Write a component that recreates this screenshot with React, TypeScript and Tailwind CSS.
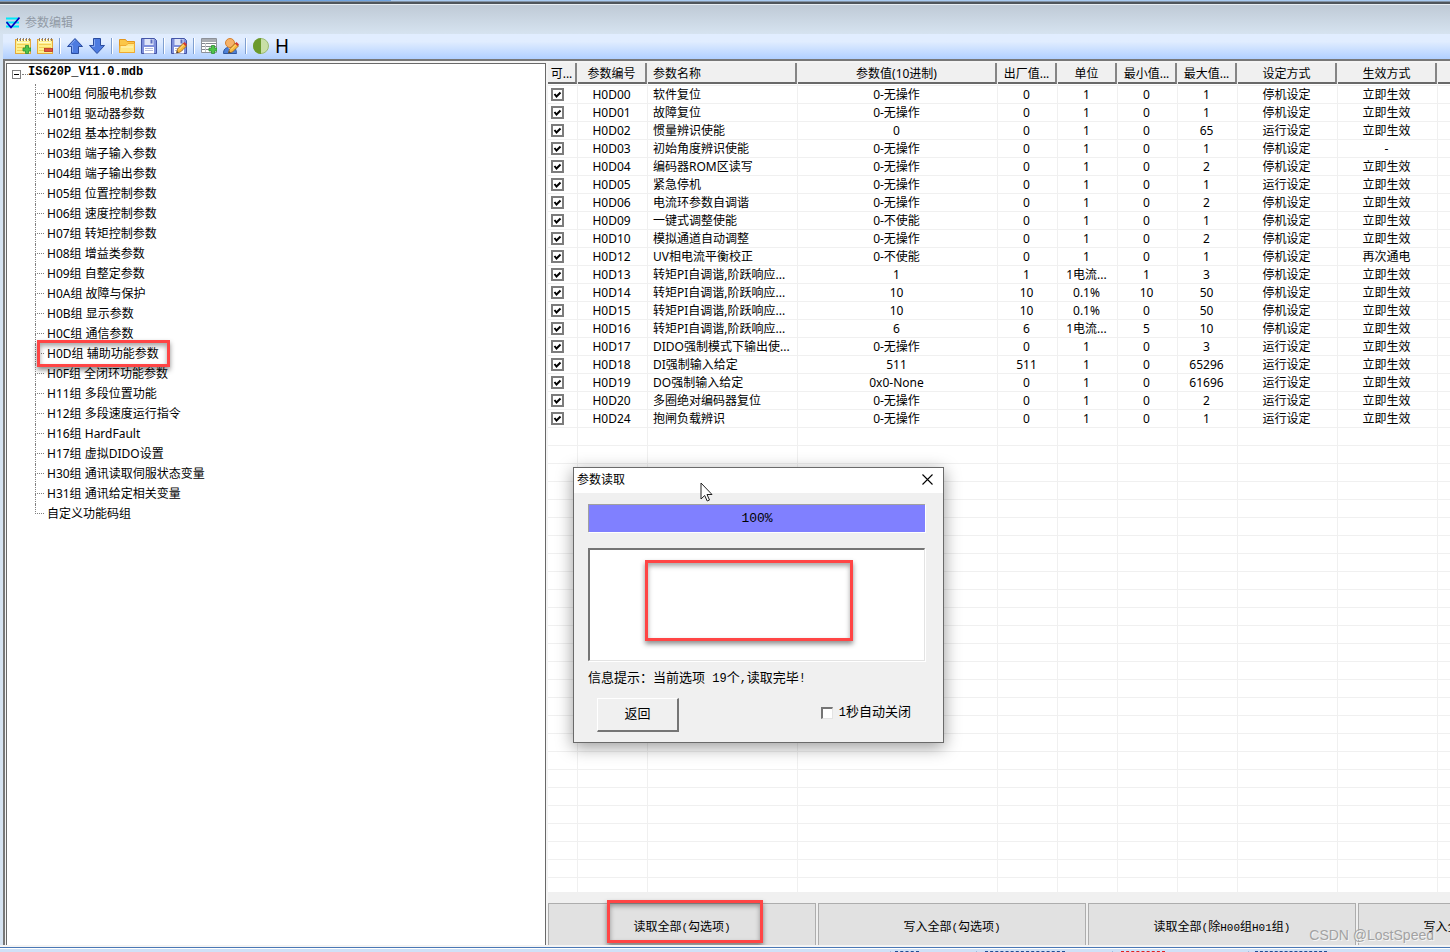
import { Fragment, useState } from "react";
import type { ReactNode } from "react";

const groups = [
  "H00组 伺服电机参数",
  "H01组 驱动器参数",
  "H02组 基本控制参数",
  "H03组 端子输入参数",
  "H04组 端子输出参数",
  "H05组 位置控制参数",
  "H06组 速度控制参数",
  "H07组 转矩控制参数",
  "H08组 增益类参数",
  "H09组 自整定参数",
  "H0A组 故障与保护",
  "H0B组 显示参数",
  "H0C组 通信参数",
  "H0D组 辅助功能参数",
  "H0F组 全闭环功能参数",
  "H11组 多段位置功能",
  "H12组 多段速度运行指令",
  "H16组 HardFault",
  "H17组 虚拟DIDO设置",
  "H30组 通讯读取伺服状态变量",
  "H31组 通讯给定相关变量",
  "自定义功能码组",
];

const headers = [
  "可...",
  "参数编号",
  "参数名称",
  "参数值(10进制)",
  "出厂值...",
  "单位",
  "最小值...",
  "最大值...",
  "设定方式",
  "生效方式",
  "",
];

const STOP = "停机设定";
const RUN = "运行设定";
const NOW = "立即生效";

// code, name, value, default, unit, min, max, set mode, effect mode
const rows = [
  ["H0D00", "软件复位", "0-无操作", "0", "1", "0", "1", STOP, NOW],
  ["H0D01", "故障复位", "0-无操作", "0", "1", "0", "1", STOP, NOW],
  ["H0D02", "惯量辨识使能", "0", "0", "1", "0", "65", RUN, NOW],
  ["H0D03", "初始角度辨识使能", "0-无操作", "0", "1", "0", "1", STOP, "-"],
  ["H0D04", "编码器ROM区读写", "0-无操作", "0", "1", "0", "2", STOP, NOW],
  ["H0D05", "紧急停机", "0-无操作", "0", "1", "0", "1", RUN, NOW],
  ["H0D06", "电流环参数自调谐", "0-无操作", "0", "1", "0", "2", STOP, NOW],
  ["H0D09", "一键式调整使能", "0-不使能", "0", "1", "0", "1", STOP, NOW],
  ["H0D10", "模拟通道自动调整", "0-无操作", "0", "1", "0", "2", STOP, NOW],
  ["H0D12", "UV相电流平衡校正", "0-不使能", "0", "1", "0", "1", STOP, "再次通电"],
  ["H0D13", "转矩PI自调谐,阶跃响应...", "1", "1", "1电流...", "1", "3", STOP, NOW],
  ["H0D14", "转矩PI自调谐,阶跃响应...", "10", "10", "0.1%", "10", "50", STOP, NOW],
  ["H0D15", "转矩PI自调谐,阶跃响应...", "10", "10", "0.1%", "0", "50", STOP, NOW],
  ["H0D16", "转矩PI自调谐,阶跃响应...", "6", "6", "1电流...", "5", "10", STOP, NOW],
  ["H0D17", "DIDO强制模式下输出使...", "0-无操作", "0", "1", "0", "3", RUN, NOW],
  ["H0D18", "DI强制输入给定", "511", "511", "1", "0", "65296", RUN, NOW],
  ["H0D19", "DO强制输入给定", "0x0-None", "0", "1", "0", "61696", RUN, NOW],
  ["H0D20", "多圈绝对编码器复位", "0-无操作", "0", "1", "0", "2", RUN, NOW],
  ["H0D24", "抱闸负载辨识", "0-无操作", "0", "1", "0", "1", RUN, NOW],
];

const emptyRows = Array.from({ length: 26 }, (_, i) => i);

const actions = [
  "读取全部(勾选项)",
  "写入全部(勾选项)",
  "读取全部(除H00组H01组)",
  "写入全部(除H00组H01组)",
];

const redBox =
  "pointer-events-none absolute border-3 border-[#ff4545] shadow-[0_3px_5px_rgba(0,0,0,0.45),inset_0_3px_5px_rgba(0,0,0,0.35)]";

// half-width characters sit a bit smaller than the Chinese ones
function Song({ children, latin = "text-xs" }: { children: string; latin?: string }) {
  return (
    <span className="font-['Liberation_Mono','Noto_Sans_CJK_SC',monospace] whitespace-pre">
      {children.split(/([\x20-\x7e]+)/).map((part, i) =>
        i % 2 ? (
          <span key={i} className={latin}>
            {part}
          </span>
        ) : (
          <Fragment key={i}>{part}</Fragment>
        )
      )}
    </span>
  );
}

function Icon({ children }: { children: ReactNode }) {
  return (
    <svg viewBox="0 0 16 16" className="size-4" aria-hidden="true">
      {children}
    </svg>
  );
}

function Notepad({ children }: { children: ReactNode }) {
  return (
    <Icon>
      <rect x="0.5" y="1.5" width="15" height="14" fill="#fdf08c" stroke="#e5a93c" />
      <path d="M2 6.5h12M2 9.5h12M2 12.5h12" stroke="#f3cf58" />
      <path d="M2 4.5h12" stroke="#fffbd0" />
      <path d="M2.5 0v3M5.5 0v3M8.5 0v3M11.5 0v3M14.5 0v3" stroke="#8a7a6a" />
      <path d="M3.5 1v2M6.5 1v2M9.5 1v2M12.5 1v2" stroke="#fff" />
      {children}
    </Icon>
  );
}

function PlusMark() {
  return (
    <path
      d="M10.5 7.5h3v2.5h2.5v3h-2.5v2.5h-3V13H8v-3h2.5z"
      fill="#4fc34a"
      stroke="#2c8f35"
      strokeWidth="0.8"
    />
  );
}

function Pencil() {
  return (
    <>
      <path d="M5.5 15l1-4 6-6 3 3-6 6z" fill="#f7b73c" stroke="#96601c" strokeWidth="0.8" />
      <path d="M8 11.5l5-5" stroke="#ffe58a" />
      <path d="M12 5.5l1.5-1.5 2.5 2.5-1.5 1.5z" fill="#d43a30" />
      <path d="M5.5 15l.5-2 1.5 1.5z" fill="#333" />
    </>
  );
}

function Disk() {
  return (
    <>
      <path d="M.5.5h13l2 2v13H.5z" fill="#7f90dc" stroke="#4456a8" />
      <path d="M3.5 1h9v6h-9z" fill="#dfe5f8" />
      <path d="M9.5 1.5h2v4h-2z" fill="#5a6cbe" />
      <path d="M3 9h10v6.5H3z" fill="#fff" />
      <path d="M4 10.5h8M4 12.5h8" stroke="#b3badb" />
    </>
  );
}

function Tool({ label, children }: { label: string; children: ReactNode }) {
  return (
    <button type="button" aria-label={label} className="size-4 shrink-0">
      {children}
    </button>
  );
}

function Separator() {
  return <span className="h-4 w-0.5 border-l border-[#7f9fd0] bg-white" />;
}

function Toolbar() {
  return (
    <div className="flex h-[25px] items-center gap-1.5 bg-linear-to-b from-[#e1edff] from-30% to-[#b0cfff] pb-0.5 pl-3">
      <Tool label="添加">
        <Notepad>
          <PlusMark />
        </Notepad>
      </Tool>
      <Tool label="删除">
        <Notepad>
          <rect x="7.5" y="10.5" width="8" height="3" fill="#e0523c" stroke="#b23322" strokeWidth="0.8" />
        </Notepad>
      </Tool>
      <Separator />
      <Tool label="上移">
        <Icon>
          <path d="M8 .5L15.500 8.500h-4v7h-7v-7h-4z" fill="#4d7be0" stroke="#2a4c9f" />
          <path d="M8 2L3 7.500h2.500V14" fill="none" stroke="#86a9f2" />
        </Icon>
      </Tool>
      <Tool label="下移">
        <Icon>
          <path d="M8 15.500L.5 7.500h4v-7h7v7h4z" fill="#4d7be0" stroke="#2a4c9f" />
          <path d="M5.500 1.500v7H3" fill="none" stroke="#86a9f2" />
        </Icon>
      </Tool>
      <Separator />
      <Tool label="打开">
        <Icon>
          <path d="M.5 14.500v-13h6l1.500 2h7.500v11z" fill="#fbc648" stroke="#e3961e" />
          <path d="M1 7.500h6l2-2h6.500v9H.5z" fill="#ffe680" stroke="#f0aa30" />
          <path d="M2 9h12" stroke="#fff6c0" />
        </Icon>
      </Tool>
      <Tool label="保存">
        <Icon>
          <Disk />
        </Icon>
      </Tool>
      <Separator />
      <Tool label="另存为">
        <Icon>
          <Disk />
          <Pencil />
        </Icon>
      </Tool>
      <Separator />
      <Tool label="添加参数">
        <Icon>
          <path d="M.5.5h15v14H.5z" fill="#fff" stroke="#8d9199" />
          <path d="M1 1h14v3H1z" fill="#a9adb3" />
          <path d="M1 5.500h14M1 8.500h14M1 11.500h14" stroke="#83878e" />
          <path d="M4.500 5v9" stroke="#c3c6cb" />
          <PlusMark />
        </Icon>
      </Tool>
      <Tool label="用户编辑">
        <Icon>
          <path d="M.5 15.500c0-4 2-6 5-6h4c3 0 4 3 4 6z" fill="#4c7fd6" stroke="#2c559f" />
          <path d="M5 9.500l2.500 3 2.500-3z" fill="#fff" />
          <circle cx="7" cy="5" r="4.500" fill="#f6b26a" stroke="#d5802e" />
          <Pencil />
        </Icon>
      </Tool>
      <Separator />
      <Tool label="对比">
        <Icon>
          <circle cx="8" cy="8" r="7.500" fill="#c9dfa6" stroke="#9cbb74" />
          <path d="M8 0a8 8 0 0 0 0 16z" fill="#6b9a2d" />
        </Icon>
      </Tool>
      <button
        type="button"
        className="font-['Noto_Sans','Noto_Sans_CJK_SC',sans-serif] text-[19px] leading-4 text-black"
      >
        H
      </button>
    </div>
  );
}

function Tree() {
  return (
    <nav className="w-[540px] shrink-0 overflow-hidden border-t border-r border-l border-[#696969] bg-white">
      <div className="flex h-5 pl-[5px]">
        <button
          type="button"
          aria-label="折叠"
          className="mt-1.5 flex size-[9px] items-center justify-center border border-[#808080]"
        >
          <span className="h-px w-[5px] bg-black" />
        </button>
        <span className="mt-2.5 ml-px h-px w-1.5 border-t border-dotted border-[#808080]" />
        <span className="font-['Liberation_Mono','Noto_Sans_CJK_SC',monospace] text-xs leading-4 font-bold">
          IS620P_V11.0.mdb
        </span>
      </div>
      <ul className="pl-7">
        {groups.map((name, i) => (
          <li key={name} className="relative flex h-5 items-center">
            <span className="flex w-[9px] flex-col">
              <span className="h-2.5 border-b border-l border-dotted border-[#808080]" />
              <span
                className={
                  i < groups.length - 1
                    ? "h-2.5 border-l border-dotted border-[#808080]"
                    : "h-2.5"
                }
              />
            </span>
            <a href="#" className="ml-[3px]">
              {name}
            </a>
            {name.startsWith("H0D") && (
              <span className={`${redBox} -top-1 left-0.5 h-[27px] w-[133px]`} />
            )}
          </li>
        ))}
      </ul>
    </nav>
  );
}

function ParamTable() {
  const [checked, setChecked] = useState(() => rows.map(() => true));

  const toggle = (i: number) =>
    setChecked(checked.map((value, n) => (n === i ? !value : value)));

  return (
    <div className="min-h-0 flex-1 overflow-hidden bg-white">
      <table className="w-[950px] table-fixed border-separate border-spacing-0">
        <colgroup>
          <col className="w-[30px]" />
          <col className="w-[70px]" />
          <col className="w-[150px]" />
          <col className="w-[200px]" />
          <col className="w-[60px]" />
          <col className="w-[60px]" />
          <col className="w-[60px]" />
          <col className="w-[60px]" />
          <col className="w-[100px]" />
          <col className="w-[100px]" />
          <col className="w-[60px]" />
        </colgroup>
        <thead>
          <tr>
            {headers.map((text, i) => (
              <th
                key={i}
                className="h-[23px] border-r border-b border-[#f0f0f0] p-0 align-top font-normal"
              >
                <div
                  className={
                    i === 2
                      ? "h-[21px] border-r-2 border-b-2 border-r-[#858585] border-b-[#696969] bg-[#f0f0f0] pl-[5px] text-left leading-[22px]"
                      : "h-[21px] border-r-2 border-b-2 border-r-[#858585] border-b-[#696969] bg-[#f0f0f0] text-center leading-[22px]"
                  }
                >
                  {text}
                </div>
              </th>
            ))}
          </tr>
        </thead>
        <tbody>
          {rows.map((row, r) => (
            <tr key={row[0]}>
              <td className="h-[18px] border-r border-b border-[#f0f0f0] p-0">
                <label className="relative ml-[3px] block size-[13px]">
                  <input
                    type="checkbox"
                    aria-label={row[0]}
                    checked={checked[r]}
                    onChange={() => toggle(r)}
                    className="peer block size-[13px] appearance-none border-2 border-[#7c7c7c] bg-white"
                  />
                  <svg
                    viewBox="0 0 13 13"
                    className="pointer-events-none absolute inset-0 hidden size-[13px] peer-checked:block"
                  >
                    <path d="M3.500 6l2 2.500 4-4" fill="none" stroke="#000" strokeWidth="2" />
                  </svg>
                </label>
              </td>
              {row.map((cell, c) => (
                <td
                  key={c}
                  className={
                    c === 1
                      ? "h-[18px] border-r border-b border-[#f0f0f0] p-0 pl-[5px] leading-[17px] whitespace-nowrap"
                      : "h-[18px] border-r border-b border-[#f0f0f0] p-0 pr-0.5 text-center leading-[17px] whitespace-nowrap"
                  }
                >
                  {cell}
                </td>
              ))}
              <td className="border-b border-[#f0f0f0] p-0" />
            </tr>
          ))}
          {emptyRows.map((n) => (
            <tr key={n}>
              {headers.map((_, c) => (
                <td key={c} className="h-[18px] border-r border-b border-[#f0f0f0] p-0" />
              ))}
            </tr>
          ))}
        </tbody>
      </table>
    </div>
  );
}

function ReadDialog() {
  const [autoClose, setAutoClose] = useState(false);

  return (
    <section
      role="dialog"
      aria-labelledby="dialog-title"
      className="absolute top-[467px] left-[573px] w-[371px] border border-[#6a6a6a] bg-[#f0f0f0] pb-2.5 shadow-[0_4px_16px_rgba(0,0,0,0.4)]"
    >
      <header className="flex h-[25px] items-center justify-between bg-white pr-2.5 pb-0.5 pl-[3px]">
        <h2 id="dialog-title">参数读取</h2>
        <button type="button" aria-label="关闭">
          <svg viewBox="0 0 11 11" className="size-[11px]">
            <path d="M.5.5l10 10M10.500.5l-10 10" stroke="#000" strokeWidth="1.100" />
          </svg>
        </button>
      </header>
      <div className="pt-[11px] pr-[18px] pl-3.5">
        <div
          role="progressbar"
          aria-valuenow={100}
          aria-label="读取进度"
          className="flex h-7 items-center justify-center border-t border-l border-[#a0a0a0] bg-[#8080ff] font-['Liberation_Mono',monospace] text-[13px] shadow-[1px_1px_0_#fff]"
        >
          100%
        </div>
        <div className="relative mt-4 h-[113px] border-t-2 border-r border-b border-l-2 border-t-[#757575] border-r-[#e3e3e3] border-b-[#e3e3e3] border-l-[#757575] bg-white shadow-[1px_1px_0_#fff]">
          <span className={`${redBox} top-2.5 left-[55px] h-[81px] w-[208px]`} />
        </div>
        <p className="mt-1.5 text-[13px] leading-5">
          <Song>信息提示：当前选项 19个,读取完毕!</Song>
        </p>
        <div className="mt-[9px] flex items-center justify-between pr-3.5 pl-[9px]">
          <button
            type="button"
            className="h-[34px] w-[82px] border-t border-r-2 border-b-2 border-l border-t-white border-r-[#757575] border-b-[#757575] border-l-white text-[13px]"
          >
            <Song>返回</Song>
          </button>
          <label className="flex items-center gap-1.5 pb-1 text-[13px] leading-5">
            <input
              type="checkbox"
              checked={autoClose}
              onChange={() => setAutoClose(!autoClose)}
              className="size-3 appearance-none border-t-2 border-r border-b border-l-2 border-t-[#757575] border-r-[#e3e3e3] border-b-[#e3e3e3] border-l-[#757575] bg-white checked:bg-black"
            />
            <Song>1秒自动关闭</Song>
          </label>
        </div>
      </div>
      {/* mouse pointer */}
      <svg viewBox="0 0 13 20" className="absolute top-3.5 left-[126px] h-5 w-[13px]">
        <path
          d="M1 1v16l3.700-3.500 2.500 5.500 2.300-1-2.500-5.500h5z"
          fill="#fff"
          stroke="#222"
          strokeWidth="1"
        />
      </svg>
    </section>
  );
}

export default function App() {
  return (
    <main className="relative flex h-screen flex-col overflow-hidden bg-[#d6e3f1] font-['Noto_Sans','Noto_Sans_CJK_SC',sans-serif] text-xs text-black">
      <div className="h-px bg-linear-to-r from-[#6fa3e0] from-27% to-[#a9cbf2] to-27%" />
      <div className="h-px bg-[#8494a6]" />
      <div className="h-0.5 bg-[#50565c]" />
      <div className="h-px bg-[#e8eef4]" />
      <header className="flex h-[29px] items-center gap-[5px] bg-linear-to-b from-[#bfcad6] to-[#d6e3f0] pt-1.5 pl-1.5">
        <svg viewBox="0 0 14 12" className="h-3 w-3.5">
          <path d="M0 1.500h12M0 5.500h13M0 9.500h13" stroke="#00e8f8" strokeWidth="2" />
          <path d="M.5 5l4.500 5.500L13.500.5" fill="none" stroke="#0000c0" strokeWidth="1.600" />
        </svg>
        <h1 className="text-[#919aa5]">参数编辑</h1>
      </header>
      <div className="ml-[3px] flex min-h-0 flex-1 flex-col">
        <Toolbar />
        <div className="flex min-h-0 flex-1 border-t-2 border-l-2 border-[#777] bg-[#f4f4f4] pt-0.5 pl-px">
          <Tree />
          <div className="ml-0.5 flex min-w-0 flex-1 flex-col bg-[#f0f0f0]">
            <ParamTable />
            <div className="flex h-[53px] gap-0.5 overflow-hidden pt-[11px]">
              {actions.map((text, i) => (
                <button
                  key={text}
                  type="button"
                  className="relative h-[49px] w-[268px] shrink-0 border border-[#adadad] bg-[#e1e1e1]"
                >
                  <Song latin="text-[11px]">{text}</Song>
                  {i === 0 && (
                    <span className={`${redBox} -top-1 left-[58px] h-[43px] w-[156px]`} />
                  )}
                </button>
              ))}
            </div>
          </div>
        </div>
      </div>
      <div className="h-0.5 bg-[#f4f4f4]" />
      <div className="h-px bg-[#4a78b5]" />
      <div className="h-px bg-white" />
      <footer className="flex h-[3px] items-end bg-[#cfe1f7] pl-[890px]">
        <span className="w-[86px] border-l border-[#9dbbe0] pl-1">
          <span className="block w-6 border-t border-dashed border-[#1f4f96]" />
        </span>
        <span className="w-[136px] border-l border-[#9dbbe0] pl-2">
          <span className="block w-20 border-t border-dashed border-[#1f4f96]" />
        </span>
        <span className="w-[136px] border-l border-[#9dbbe0] pl-2">
          <span className="block w-11 border-t border-dashed border-[#e02020]" />
        </span>
        <span className="w-[186px] border-l border-[#9dbbe0] pl-1.5">
          <span className="block w-[72px] border-t border-dashed border-[#1f4f96]" />
        </span>
      </footer>
      <ReadDialog />
      <span className="pointer-events-none absolute right-4 bottom-[7px] font-['Liberation_Sans',sans-serif] text-sm text-[#a2a2a2] [text-shadow:1px_1px_0_#f5f5f5]">
        CSDN @LostSpeed
      </span>
    </main>
  );
}
